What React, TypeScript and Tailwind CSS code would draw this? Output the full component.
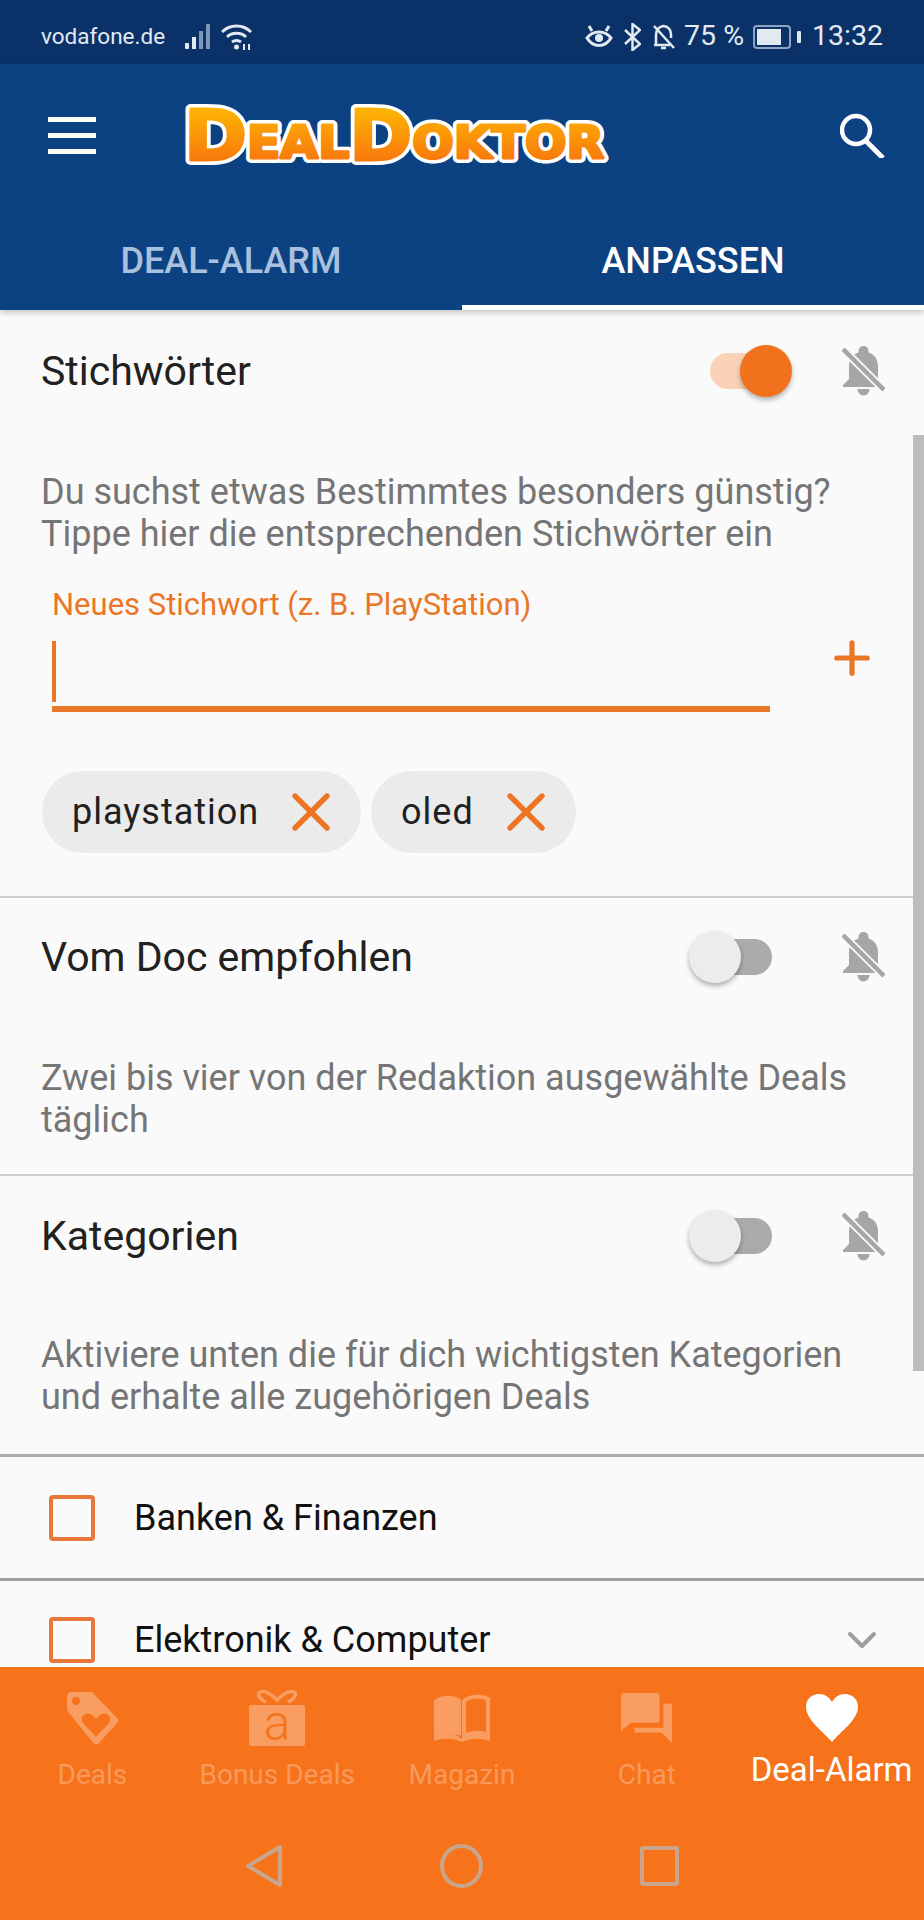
import { ReactNode } from "react";
import { X, Plus, ChevronDown } from "lucide-react";

const ICON = "#f99d62";
const ORANGE = "#f6731c";

function Logo() {
  const letters = (
    <>
      <tspan fontSize="70">D</tspan>
      <tspan fontSize="45" dy="-2">EAL</tspan>
      <tspan fontSize="70" dy="2">D</tspan>
      <tspan fontSize="45" dy="-2">OKTOR</tspan>
    </>
  );
  return (
    <svg width="423" height="61" viewBox="0 0 423 61" className="block overflow-visible">
      <defs>
        <linearGradient id="logoFill" x1="0" y1="0" x2="0" y2="1">
          <stop offset="0" stopColor="#ffc400" />
          <stop offset="1" stopColor="#f6660f" />
        </linearGradient>
      </defs>
      <g fontFamily="'DejaVu Sans', sans-serif" fontWeight="700" strokeLinejoin="round">
        <text x="-2" y="55" textLength="420" lengthAdjust="spacingAndGlyphs" fill="#fff" stroke="#fff" strokeWidth="10">
          {letters}
        </text>
        <text
          x="-2"
          y="55"
          textLength="420"
          lengthAdjust="spacingAndGlyphs"
          fill="url(#logoFill)"
          stroke="url(#logoFill)"
          strokeWidth="3"
        >
          {letters}
        </text>
      </g>
    </svg>
  );
}

function BellOff() {
  return (
    <svg width="43" height="50" viewBox="0 0 43 50" className="block">
      <path
        d="M21.500 0c-3 0-5 2.200-5 5v1.500C9.500 8.500 7 14.500 7 21v12l-6 6v2h41v-2l-6-6V21c0-6.500-2.500-12.500-9.500-14.500V5c0-2.800-2-5-5-5z"
        fill="#a6a6a6"
      />
      <path d="M15.500 43h12c0 3.500-2.500 6.500-6 6.500s-6-3-6-6.500z" fill="#a6a6a6" />
      <path d="M-1 1l44 44" stroke="#fafafa" strokeWidth="8" />
      <path d="M1 3l41 41" stroke="#a6a6a6" strokeWidth="4.500" />
    </svg>
  );
}

function Toggle({ on }: { on?: boolean }) {
  return (
    <div className={on ? "relative mr-[50px] h-[52px] w-[82px]" : "relative mr-[70px] h-[52px] w-[83px]"}>
      <div
        className={
          on
            ? "absolute left-0 top-[8px] h-[36px] w-[70px] rounded-full bg-[#f9d2b8]"
            : "absolute right-0 top-[8px] h-[36px] w-[70px] rounded-full bg-[#ababab]"
        }
      />
      <div
        className={
          on
            ? "absolute right-0 top-0 h-[52px] w-[52px] rounded-full bg-[#f2711c] shadow-[0_3px_5px_rgba(0,0,0,0.3)]"
            : "absolute left-0 top-0 h-[52px] w-[52px] rounded-full bg-[#ececec] shadow-[0_3px_5px_rgba(0,0,0,0.3)]"
        }
      />
    </div>
  );
}

function SectionRow({ title, on, height }: { title: string; on?: boolean; height: string }) {
  return (
    <div className={`flex items-center pl-[41px] pr-[39px] ${height}`}>
      <span className="flex-1 text-[41px] leading-[48px] text-[#212121]">{title}</span>
      <Toggle on={on} />
      <BellOff />
    </div>
  );
}

function Desc({ children, pt }: { children: ReactNode; pt: string }) {
  return <p className={`px-[41px] text-[36px] leading-[42px] text-[#757575] ${pt}`}>{children}</p>;
}

function Chip({ label, width }: { label: string; width: string }) {
  return (
    <div className={`flex h-[82px] items-center justify-between rounded-full bg-[#ebebeb] pl-[30px] pr-[18px] ${width}`}>
      <span className="text-[36px] tracking-[1px] text-[#212121]">{label}</span>
      <X size={64} strokeWidth={2} color="#ed7425" />
    </div>
  );
}

function Category({ label, chevron, height, border }: { label: string; chevron?: boolean; height: string; border?: boolean }) {
  return (
    <div className={`flex shrink-0 items-center pl-[49px] pr-[44px] ${height} ${border ? "border-b-[3px] border-[#9e9e9e]" : ""}`}>
      <div className="h-[46px] w-[46px] rounded-[4px] border-[4px] border-[#e9773a]" />
      <span className="ml-[39px] flex-1 text-[36px] text-[#111]">{label}</span>
      {chevron && <ChevronDown size={48} strokeWidth={2} color="#9e9e9e" className="-mr-[6px]" />}
    </div>
  );
}

function NavItem({ icon, label, active }: { icon: ReactNode; label: string; active?: boolean }) {
  return (
    <div className="flex flex-col items-center">
      <div className="flex h-[52px] items-center justify-center">{icon}</div>
      <span
        className={
          active
            ? "mt-[6px] whitespace-nowrap text-[33px] leading-[40px] text-white"
            : "mt-[13px] whitespace-nowrap text-[28px] leading-[36px] text-[#f9995c]"
        }
      >
        {label}
      </span>
    </div>
  );
}

const TagIcon = (
  <svg width="53" height="54" viewBox="0 0 53 54">
    <path d="M6 1h18c2 0 3 .5 4 2l23 24c1.500 1.500 1.500 3 .5 4.500L33 52c-1.500 2-4 2-5.500 0L3 22c-1-1.500-2-3-2-5V6c0-3 2-5 5-5z" fill={ICON} />
    <circle cx="10" cy="10" r="4" fill={ORANGE} />
    <path d="M30 46L17 32c-5-7 5-13 10-7l3 3 3-3c5-6 15 0 10 7z" fill={ORANGE} />
  </svg>
);

const GiftIcon = (
  <svg width="58" height="56" viewBox="0 0 58 56" className="overflow-visible">
    <path d="M12 2c5-2 12 3 17 8 5-5 12-10 17-8 3 2 1 7-6 10M12 2c-3 2-1 7 6 10" fill="none" stroke={ICON} strokeWidth="3.500" />
    <rect x="1" y="15" width="56" height="41" rx="2" fill={ICON} />
    <text x="29" y="50" textAnchor="middle" fontFamily="Roboto, sans-serif" fontWeight="300" fontSize="50" fill={ORANGE}>
      a
    </text>
  </svg>
);

const BookIcon = (
  <svg width="58" height="48" viewBox="0 0 58 48">
    <path d="M1 6c8-5 20-6 27 0v36c-7-3-19-4-27 1z" fill={ICON} />
    <path d="M31 7c6-5 17-6 24-2v36c-7-3-17-3-24 1z" fill="none" stroke={ICON} strokeWidth="4" />
    <path d="M1 42c9-4 20-4 28 3 8-7 19-7 28-3v5c-9-3-20-3-28 1-8-4-19-4-28-1z" fill={ICON} />
  </svg>
);

const ChatIcon = (
  <svg width="52" height="52" viewBox="0 0 54 52">
    <path d="M3 0h34c2 0 3 1 3 3v25c0 2-1 3-3 3H10l-10 9V3c0-2 1-3 3-3z" fill={ICON} />
    <path d="M44 11h6c2 0 3 1 3 3v38l-11-11H14v-5h30z" fill={ICON} />
  </svg>
);

const HeartIcon = (
  <svg width="52" height="48" viewBox="0 0 52 48">
    <path d="M26 48C18 38 0 26 0 13 0 5 6 0 13 0c6 0 10 3 13 8 3-5 7-8 13-8 7 0 13 5 13 13 0 13-18 25-26 35z" fill="#fff" />
  </svg>
);

export default function App() {
  return (
    <div className="flex h-[1920px] w-[924px] flex-col overflow-hidden bg-[#fafafa] font-['Roboto',sans-serif]">
      {/* status bar */}
      <div className="flex h-[64px] shrink-0 items-center bg-[#0b3268] pl-[41px] pr-[41px] pt-[9px] text-[#e3e9f1]">
        <span className="text-[22.500px] leading-none">vodafone.de</span>
        <svg width="27" height="26" viewBox="0 0 27 26" className="ml-[20px]">
          <rect x="0" y="19" width="4" height="6" rx="1" fill="#e3e9f1" />
          <rect x="7" y="13" width="4" height="12" fill="#e3e9f1" />
          <rect x="14" y="7" width="4" height="18" fill="#7f97b7" />
          <rect x="21" y="0" width="4" height="25" fill="#7f97b7" />
        </svg>
        <svg width="32" height="26" viewBox="0 0 32 26" className="ml-[9px]" fill="none" stroke="#e3e9f1" strokeWidth="3">
          <path d="M1 8c8-8 21-8 29 0M6 13c5-5 14-5 19 0M11 18c3-2 6-2 9 0" />
          <circle cx="15.500" cy="23" r="2.500" fill="#e3e9f1" stroke="none" />
          <path d="M23 20v6M28 20v6" strokeWidth="2" />
        </svg>
        <svg width="28" height="24" viewBox="0 0 28 24" className="ml-auto" fill="none" stroke="#e3e9f1" strokeWidth="3">
          <path d="M2 13c6-8 18-8 24 0-6 10-18 10-24 0z" />
          <circle cx="14" cy="13" r="4" fill="#e3e9f1" stroke="none" />
          <path d="M4 1l3 5M24 1l-3 5" />
        </svg>
        <svg width="17" height="28" viewBox="0 0 17 28" className="ml-[11px]" fill="none" stroke="#e3e9f1" strokeWidth="2.500">
          <path d="M1 7l15 14-7.500 6V1L16 7 1 21" />
        </svg>
        <svg width="24" height="28" viewBox="0 0 24 28" className="ml-[11px]" fill="none" stroke="#e3e9f1" strokeWidth="2.500">
          <path d="M4 21V12c0-5 3-8 7-9 4 0 8 3 8 8v4M2 22h16M9 25h5" />
          <path d="M2 3l20 22" />
        </svg>
        <span className="ml-[8px] text-[28.500px] leading-none">75 %</span>
        <div className="ml-[9px] flex items-center">
          <div className="h-[24px] w-[38px] rounded-[4px] border-[2px] border-[#8ea4c2] p-[2px]">
            <div className="h-full w-[24px] bg-[#e3e9f1]" />
          </div>
          <div className="ml-[6px] h-[12px] w-[4px] rounded-[1px] bg-[#e3e9f1]" />
        </div>
        <span className="ml-[11px] text-[28.500px] leading-none">13:32</span>
      </div>

      {/* header + tabs */}
      <div className="z-10 shrink-0 bg-[#0d4282] shadow-[0_3px_6px_rgba(0,0,0,0.2)]">
        <div className="flex h-[142px] items-center pl-[48px] pr-[39px]">
          <div className="flex w-[48px] flex-col gap-[11px]">
            <div className="h-[5px] bg-white" />
            <div className="h-[5px] bg-white" />
            <div className="h-[5px] bg-white" />
          </div>
          <div className="ml-[90px]">
            <Logo />
          </div>
          <svg width="45" height="45" viewBox="0 0 45 45" className="ml-auto" fill="none" stroke="#fff">
            <circle cx="16" cy="17" r="14" strokeWidth="4.500" />
            <path d="M26 28l17 17" strokeWidth="5" />
          </svg>
        </div>
        <div className="flex h-[104px]">
          <div className="flex flex-1 items-center justify-center border-b-[5px] border-transparent pt-[10px] text-[36px] font-medium text-[#a9c0de]">
            DEAL-ALARM
          </div>
          <div className="flex flex-1 items-center justify-center border-b-[5px] border-white pt-[10px] text-[36px] font-medium text-white">
            ANPASSEN
          </div>
        </div>
      </div>

      {/* scrollable content */}
      <div className="relative min-h-0 flex-1 overflow-hidden">
        <div className="absolute right-0 top-[125px] h-[936px] w-[11px] bg-[#bdbdbd]" />

        <div className="h-[588px] border-b-[2px] border-[#cccccc]">
          <SectionRow title="Stichwörter" on height="h-[122px]" />
          <Desc pt="pt-[39px]">
            Du suchst etwas Bestimmtes besonders günstig?
            <br />
            Tippe hier die entsprechenden Stichwörter ein
          </Desc>
          <div className="mt-[33px] flex pl-[52px]">
            <div className="w-[718px]">
              <div className="text-[31px] leading-[34px] text-[#ea7627]">Neues Stichwort (z. B. PlayStation)</div>
              <div className="mt-[19px] h-[61px] w-[4px] bg-[#ea7627]" />
              <div className="mt-[4px] h-[6px] bg-[#ea7627]" />
            </div>
            <div className="ml-[56px] mt-[44px]">
              <Plus size={52} strokeWidth={2.400} color="#ea7627" />
            </div>
          </div>
          <div className="mt-[59px] flex gap-[10px] pl-[42px]">
            <Chip label="playstation" width="w-[319px]" />
            <Chip label="oled" width="w-[205px]" />
          </div>
        </div>

        <div className="h-[278px] border-b-[2px] border-[#cccccc]">
          <SectionRow title="Vom Doc empfohlen" height="h-[118px]" />
          <Desc pt="pt-[41px]">
            Zwei bis vier von der Redaktion ausgewählte Deals
            <br />
            täglich
          </Desc>
        </div>

        <div className="h-[281px] border-b-[3px] border-[#ababab]">
          <SectionRow title="Kategorien" height="h-[120px]" />
          <Desc pt="pt-[38px]">
            Aktiviere unten die für dich wichtigsten Kategorien
            <br />
            und erhalte alle zugehörigen Deals
          </Desc>
        </div>

        <Category label="Banken & Finanzen" height="h-[124px]" border />
        <Category label="Elektronik & Computer" chevron height="h-[118px]" />
      </div>

      {/* bottom navigation */}
      <div className="z-10 h-[253px] shrink-0 bg-[#f6731c]">
        <div className="grid h-[160px] grid-cols-5 pt-[25px]">
          <NavItem icon={TagIcon} label="Deals" />
          <NavItem icon={GiftIcon} label="Bonus Deals" />
          <NavItem icon={BookIcon} label="Magazin" />
          <NavItem icon={ChatIcon} label="Chat" />
          <NavItem icon={HeartIcon} label="Deal-Alarm" active />
        </div>
        <div className="flex justify-center gap-[157px] pt-[17px]">
          <svg width="38" height="44" viewBox="0 0 38 44" fill="none" stroke="#c9a58d" strokeWidth="4" strokeLinejoin="round">
            <path d="M35 3v38L3 22z" />
          </svg>
          <svg width="43" height="44" viewBox="0 0 43 44" fill="none" stroke="#c9a58d" strokeWidth="4">
            <ellipse cx="21.500" cy="22" rx="19.500" ry="20" />
          </svg>
          <div className="mt-[2px] h-[40px] w-[39px] rounded-[3px] border-[4px] border-[#c9a58d]" />
        </div>
      </div>
    </div>
  );
}
